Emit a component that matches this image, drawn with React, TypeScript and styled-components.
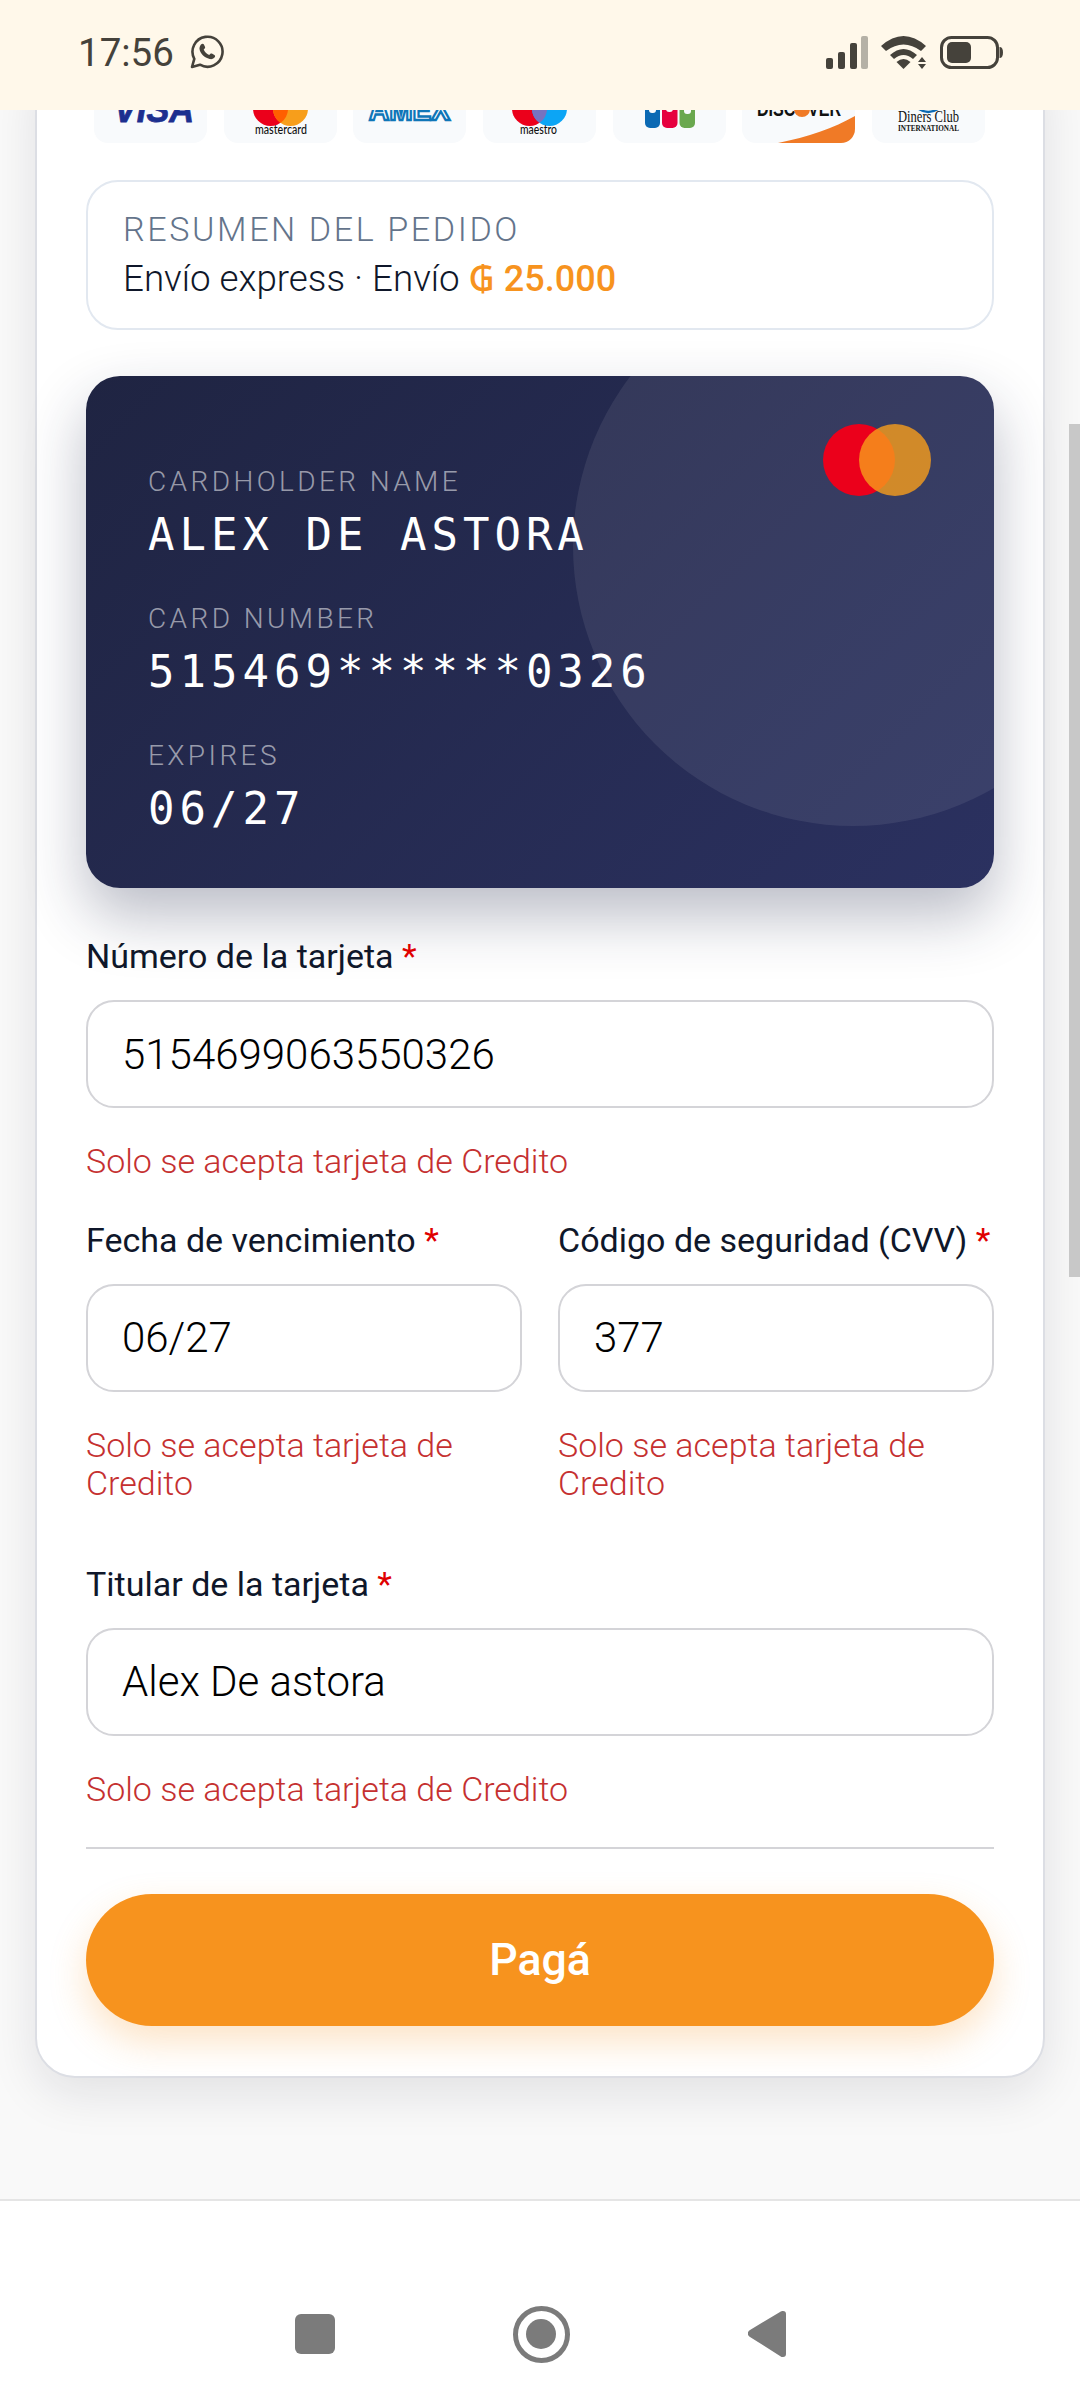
import React from 'react';
import styled, { createGlobalStyle } from 'styled-components';

const GlobalStyle = createGlobalStyle`
  html, body {
    margin: 0;
    padding: 0;
    background: #f9f9f9;
    font-family: Roboto, "Noto Sans", sans-serif;
  }
  * {
    box-sizing: border-box;
  }
`;

const Screen = styled.div`
  width: 1080px;
  height: 2400px;
  display: flex;
  flex-direction: column;
  overflow: hidden;
  background: #f9f9f9;
`;

const StatusBar = styled.div`
  height: 110px;
  flex: none;
  display: flex;
  align-items: center;
  justify-content: space-between;
  padding: 0 77px 6px 78px;
  background: #fff8ea;
  color: #45423b;
  position: relative;
  z-index: 2;
`;

const StatusLeft = styled.div`
  display: flex;
  align-items: center;
  gap: 16px;
  font-size: 38.5px;
`;

const StatusRight = styled.div`
  display: flex;
  align-items: center;
  gap: 13px;
  svg {
    display: block;
  }
`;

const Viewport = styled.div`
  flex: 1;
  min-height: 0;
  position: relative;
  overflow: hidden;
`;

const ScrollThumb = styled.div`
  position: absolute;
  top: 314px;
  right: 0;
  width: 11px;
  height: 853px;
  background: #c8c8c8;
`;

const Panel = styled.div`
  width: 1010px;
  margin: -60px 0 0 35px;
  padding: 11px 49px 50px;
  background: #fff;
  border: 2px solid #dcdee4;
  border-radius: 40px;
  box-shadow: 0 16px 48px rgba(15, 23, 42, 0.1);
`;

const LogoRow = styled.div`
  display: flex;
  gap: 16.7px;
  padding: 0 8px;
  margin-bottom: 37px;
`;

const LogoTile = styled.div`
  flex: none;
  width: 113px;
  height: 80px;
  background: #f8fafc;
  border-radius: 14px;
  overflow: hidden;
  svg {
    display: block;
  }
`;

const Summary = styled.div`
  height: 150px;
  padding: 27px 35px 0;
  border: 2px solid #e2e8f0;
  border-radius: 32px;
  margin-bottom: 46px;
`;

const SummaryTitle = styled.div`
  font-size: 34.1px;
  line-height: 40px;
  font-weight: 300;
  letter-spacing: 2.6px;
  color: #64748b;
  margin-bottom: 9px;
`;

const SummaryText = styled.div`
  font-size: 36.75px;
  line-height: 42px;
  font-weight: 300;
  color: #0f172a;
`;

const Price = styled.span`
  color: #f7931e;
  font-size: 36px;
  font-weight: 500;
`;

const CardShadow = styled.div`
  border-radius: 34px;
  box-shadow: 0 28px 60px rgba(30, 35, 70, 0.3);
  margin-bottom: 48px;
`;

const CreditCard = styled.div`
  position: relative;
  height: 512px;
  padding: 88px 62px 0;
  border-radius: 34px;
  overflow: hidden;
  background: linear-gradient(135deg, #1f2442 0%, #2b3160 100%);
`;

const CardCircle = styled.div`
  position: absolute;
  top: -110px;
  right: -139px;
  width: 560px;
  height: 560px;
  border-radius: 50%;
  background: rgba(255, 255, 255, 0.08);
`;

const CardBrand = styled.div`
  position: absolute;
  top: 48px;
  right: 63px;
  display: flex;
`;

const BrandDot = styled.div<{ $color: string; $overlap?: boolean }>`
  width: 72px;
  height: 72px;
  border-radius: 50%;
  background: ${({ $color }) => $color};
  margin-left: ${({ $overlap }) => ($overlap ? '-36px' : '0')};
  opacity: ${({ $overlap }) => ($overlap ? 0.8 : 1)};
`;

const CardField = styled.div`
  position: relative;
  height: 137px;
`;

const CardLabel = styled.div`
  font-size: 28px;
  line-height: 36px;
  font-weight: 300;
  letter-spacing: 3.4px;
  color: rgba(255, 255, 255, 0.55);
`;

const CardValue = styled.div`
  font-family: "DejaVu Sans Mono", "Liberation Mono", monospace;
  font-size: 44px;
  line-height: 60px;
  letter-spacing: 5px;
  color: #fff;
  margin-top: 5px;
`;

const Field = styled.div`
  margin-bottom: 39px;
`;

const Label = styled.div`
  font-size: 34px;
  line-height: 40px;
  font-weight: 450;
  color: #0f172a;
  margin-bottom: 24px;
  white-space: nowrap;
`;

const Required = styled.span`
  color: #e00000;
`;

const Input = styled.input`
  display: block;
  width: 100%;
  height: 108px;
  padding: 0 34px;
  border: 2px solid #d4d4d8;
  border-radius: 28px;
  background: #fff;
  font-family: Roboto, sans-serif;
  font-size: 42px;
  font-weight: 300;
  color: #000;
  outline: none;
`;

const ErrorText = styled.div`
  margin-top: 34px;
  font-size: 34px;
  line-height: 38.5px;
  font-weight: 300;
  color: #c53030;
`;

const TwoColumns = styled.div`
  display: grid;
  grid-template-columns: 1fr 1fr;
  gap: 36px;
  margin-bottom: 22px;
`;

const Divider = styled.div`
  height: 2px;
  background: #d4d4d8;
  margin: 8px 0 45px;
`;

const PayButton = styled.button`
  display: block;
  width: 100%;
  height: 132px;
  border: none;
  border-radius: 66px;
  background: #f7931e;
  color: #fff;
  font-family: Roboto, sans-serif;
  font-size: 44.6px;
  font-weight: 480;
  box-shadow: 0 16px 36px rgba(247, 147, 30, 0.25);
`;

const NavBar = styled.div`
  height: 201px;
  flex: none;
  display: flex;
  align-items: center;
  justify-content: center;
  gap: 178px;
  padding-top: 67px;
  background: #fff;
  border-top: 2px solid #e5e5e5;
`;

const NavSquare = styled.div`
  width: 40px;
  height: 40px;
  border-radius: 6px;
  background: #7b7b7b;
`;

const NavCircle = styled.div`
  width: 57px;
  height: 57px;
  border-radius: 50%;
  border: 5px solid #7b7b7b;
  display: flex;
  align-items: center;
  justify-content: center;
  &::after {
    content: '';
    width: 30px;
    height: 30px;
    border-radius: 50%;
    background: #7b7b7b;
  }
`;

const logoFont = '"Liberation Sans", sans-serif';
const squeeze = 'spacingAndGlyphs';

const VisaLogo = () => (
  <svg width="113" height="80" viewBox="0 0 113 80">
    <text x="20" y="59" textLength="80" lengthAdjust={squeeze} fontFamily={logoFont} fontSize="36" fontWeight="700" fontStyle="italic" fill="#1c2f8f" stroke="#1c2f8f" strokeWidth="0.8">VISA</text>
  </svg>
);

const MastercardLogo = () => (
  <svg width="113" height="80" viewBox="0 0 113 80">
    <circle cx="46.5" cy="45.5" r="17.5" fill="#eb001b" />
    <circle cx="66.5" cy="45.5" r="17.5" fill="#f79e1b" />
    <path d="M56.5 31.1A17.5 17.5 0 0 1 56.5 59.9A17.5 17.5 0 0 1 56.5 31.1z" fill="#ff5f00" />
    <text x="31" y="71" textLength="52" lengthAdjust={squeeze} fontFamily="Lato, sans-serif" fontSize="13" fontWeight="500" fill="#111">mastercard</text>
  </svg>
);

const AmexLogo = () => (
  <svg width="113" height="80" viewBox="0 0 113 80">
    <text x="16" y="57" textLength="81" lengthAdjust={squeeze} fontFamily={logoFont} fontSize="32" fontWeight="700" fill="#fff" stroke="#0f76b8" strokeWidth="2.5">AMEX</text>
  </svg>
);

const MaestroLogo = () => (
  <svg width="113" height="80" viewBox="0 0 113 80">
    <circle cx="46.5" cy="45.5" r="17.5" fill="#eb001b" />
    <circle cx="66.5" cy="45.5" r="17.5" fill="#0ca5f5" />
    <path d="M56.5 31.1A17.5 17.5 0 0 1 56.5 59.9A17.5 17.5 0 0 1 56.5 31.1z" fill="#7673c0" />
    <text x="37" y="71" textLength="37" lengthAdjust={squeeze} fontFamily="Lato, sans-serif" fontSize="13" fontWeight="500" fill="#111">maestro</text>
  </svg>
);

const JcbLogo = () => (
  <svg width="113" height="80" viewBox="0 0 113 80">
    <rect x="32" y="14" width="15" height="51" rx="5" fill="#0b69b4" />
    <rect x="49" y="14" width="15.5" height="51" rx="5" fill="#e6003f" />
    <rect x="66.5" y="14" width="15.5" height="51" rx="5" fill="#6aa84f" />
    <rect x="36" y="25" width="7" height="25" rx="3" fill="#f8fafc" />
    <rect x="53" y="25" width="7" height="24" rx="3" fill="#f8fafc" />
    <rect x="71" y="25" width="7" height="26" rx="3" fill="#f8fafc" />
  </svg>
);

const DiscoverLogo = () => (
  <svg width="113" height="80" viewBox="0 0 113 80">
    <text x="15" y="53" textLength="84" lengthAdjust={squeeze} fontFamily={logoFont} fontSize="22" fontWeight="700" fill="#111">DISCOVER</text>
    <circle cx="60" cy="46" r="8" fill="#f07a26" />
    <path d="M36 80C66 74 92 65 113 53V80z" fill="#f07a26" />
  </svg>
);

const DinersLogo = () => (
  <svg width="113" height="80" viewBox="0 0 113 80">
    <path d="M47 46Q56 52 66 46" fill="none" stroke="#0b69b4" strokeWidth="2.5" />
    <text x="26" y="59" textLength="61" lengthAdjust={squeeze} fontFamily='"Liberation Serif", serif' fontSize="17" fill="#111">Diners Club</text>
    <text x="26" y="68" textLength="61" lengthAdjust={squeeze} fontFamily='"Liberation Serif", serif' fontSize="8" fontWeight="700" fill="#111">INTERNATIONAL</text>
  </svg>
);

const WhatsappIcon = () => (
  <svg width="34" height="34" viewBox="0 0 34 34" fill="none">
    <path d="M2 32l2.3-8.2A15 15 0 1 1 10 29.7z" stroke="#45423b" strokeWidth="2.6" strokeLinejoin="round" />
    <path d="M11 9.5c1-1 2.4-1 2.9 0l1.2 2.6c.2.6 0 1.1-.4 1.5l-1 1c1 2.4 2.9 4.3 5.5 5.4l1.2-1.2c.4-.4 1-.5 1.5-.2l2.5 1.3c.8.4.9 1.5.3 2.4-1 1.5-3 2.2-5 1.7-5.400-1.300-9.500-5.400-10.200-9.900-.2-1.600.5-3.300 1.500-4.600z" fill="#45423b" />
  </svg>
);

const SignalIcon = () => (
  <svg width="42" height="33" viewBox="0 0 42 33">
    <rect x="0" y="22" width="7" height="11" rx="2" fill="#45423b" />
    <rect x="12" y="16" width="7" height="17" rx="2" fill="#45423b" />
    <rect x="24" y="7" width="7" height="26" rx="2" fill="#45423b" />
    <rect x="35" y="0" width="7" height="33" rx="2" fill="#b5b1a6" />
  </svg>
);

const WifiIcon = () => (
  <svg width="46" height="33" viewBox="0 0 46 33">
    <path d="M0 10Q22.500 -10 45 10L40 15Q22.500 2 5 15z" fill="#45423b" />
    <path d="M9 19Q22.500 7 36 19L32 23Q22.500 15 13 23z" fill="#45423b" />
    <path d="M15.500 26Q22.500 20 29.500 26L22.500 33z" fill="#45423b" />
    <path d="M41 21l4 5H37zM37 28h8l-4 5z" fill="#45423b" />
  </svg>
);

const BatteryIcon = () => (
  <svg width="63" height="33" viewBox="0 0 63 33">
    <rect x="1.500" y="1.500" width="56" height="30" rx="10" fill="none" stroke="#45423b" strokeWidth="3" />
    <rect x="7" y="6" width="24" height="21" rx="5" fill="#45423b" />
    <path d="M59.500 11c2.500 0 3.500 2 3.500 5.500s-1 5.500-3.500 5.500z" fill="#45423b" />
  </svg>
);

const BackIcon = () => (
  <svg width="38" height="48" viewBox="0 0 38 48">
    <path d="M35 1c2 0 3 1 3 3v40c0 2-1 3-3 3-1 0-2 0-3-1L2 27c-3-2-3-5 0-7L32 2c1-1 2-1 3-1z" fill="#7b7b7b" />
  </svg>
);

const errorMessage = 'Solo se acepta tarjeta de Credito';

const App: React.FC = () => {
  return (
    <Screen>
      <GlobalStyle />
      <StatusBar>
        <StatusLeft>
          17:56
          <WhatsappIcon />
        </StatusLeft>
        <StatusRight>
          <SignalIcon />
          <WifiIcon />
          <BatteryIcon />
        </StatusRight>
      </StatusBar>

      <Viewport>
        <Panel>
          <LogoRow>
            <LogoTile><VisaLogo /></LogoTile>
            <LogoTile><MastercardLogo /></LogoTile>
            <LogoTile><AmexLogo /></LogoTile>
            <LogoTile><MaestroLogo /></LogoTile>
            <LogoTile><JcbLogo /></LogoTile>
            <LogoTile><DiscoverLogo /></LogoTile>
            <LogoTile><DinersLogo /></LogoTile>
          </LogoRow>

          <Summary>
            <SummaryTitle>RESUMEN DEL PEDIDO</SummaryTitle>
            <SummaryText>
              Envío express · Envío <Price>₲ 25.000</Price>
            </SummaryText>
          </Summary>

          <CardShadow>
            <CreditCard>
              <CardCircle />
              <CardBrand>
                <BrandDot $color="#eb001b" />
                <BrandDot $color="#f79e1b" $overlap />
              </CardBrand>
              <CardField>
                <CardLabel>CARDHOLDER NAME</CardLabel>
                <CardValue>ALEX DE ASTORA</CardValue>
              </CardField>
              <CardField>
                <CardLabel>CARD NUMBER</CardLabel>
                <CardValue>515469******0326</CardValue>
              </CardField>
              <CardField>
                <CardLabel>EXPIRES</CardLabel>
                <CardValue>06/27</CardValue>
              </CardField>
            </CreditCard>
          </CardShadow>

          <Field>
            <Label>Número de la tarjeta <Required>*</Required></Label>
            <Input readOnly value="5154699063550326" />
            <ErrorText>{errorMessage}</ErrorText>
          </Field>

          <TwoColumns>
            <Field>
              <Label>Fecha de vencimiento <Required>*</Required></Label>
              <Input readOnly value="06/27" />
              <ErrorText>{errorMessage}</ErrorText>
            </Field>
            <Field>
              <Label>Código de seguridad (CVV) <Required>*</Required></Label>
              <Input readOnly value="377" />
              <ErrorText>{errorMessage}</ErrorText>
            </Field>
          </TwoColumns>

          <Field>
            <Label>Titular de la tarjeta <Required>*</Required></Label>
            <Input readOnly value="Alex De astora" />
            <ErrorText>{errorMessage}</ErrorText>
          </Field>

          <Divider />
          <PayButton>Pagá</PayButton>
        </Panel>
        <ScrollThumb />
      </Viewport>

      <NavBar>
        <NavSquare />
        <NavCircle />
        <BackIcon />
      </NavBar>
    </Screen>
  );
};

export default App;
